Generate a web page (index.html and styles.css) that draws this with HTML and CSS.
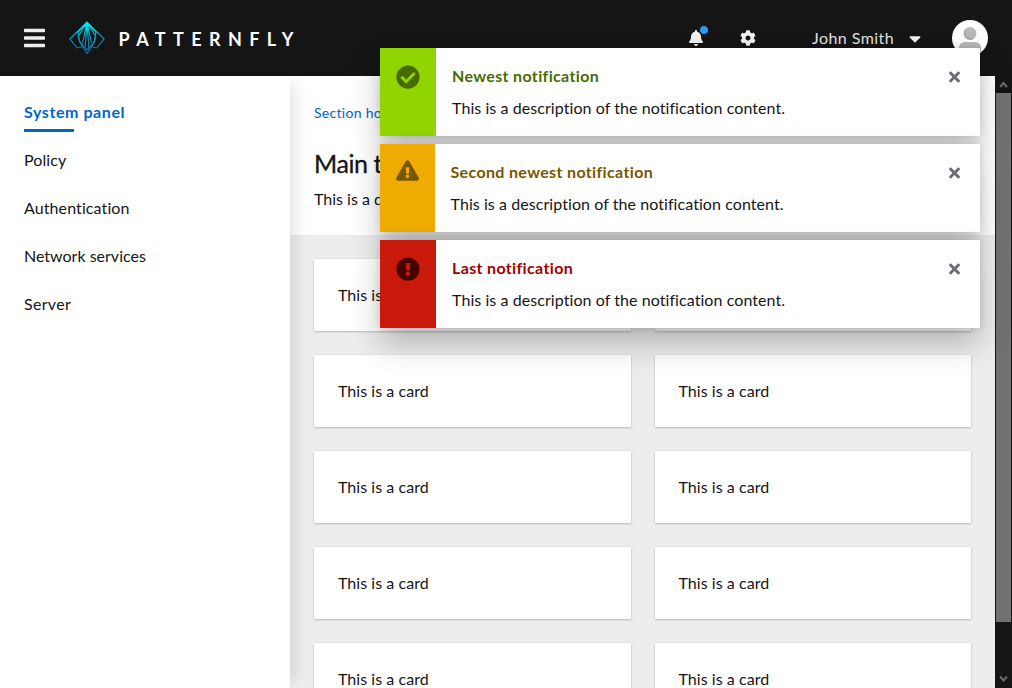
FILE: index.html
```
<!DOCTYPE html>
<html lang="en">
<head>
<meta charset="utf-8">
<title>PatternFly</title>
<link rel="stylesheet" href="styles.css">
</head>
<body>
<div class="page">
  <header class="masthead">
    <button class="icon-button menu" aria-label="Menu">
      <svg width="21" height="24" viewBox="0 0 448 512" fill="currentColor"><path d="M16 132h416c8.837 0 16-7.163 16-16V76c0-8.837-7.163-16-16-16H16C7.163 60 0 67.163 0 76v40c0 8.837 7.163 16 16 16zm0 160h416c8.837 0 16-7.163 16-16v-40c0-8.837-7.163-16-16-16H16c-8.837 0-16 7.163-16 16v40c0 8.837 7.163 16 16 16zm0 160h416c8.837 0 16-7.163 16-16v-40c0-8.837-7.163-16-16-16H16c-8.837 0-16 7.163-16 16v40c0 8.837 7.163 16 16 16z"/></svg>
    </button>
    <div class="brand">
      <svg class="brand-mark" width="36" height="34" viewBox="0 0 36 34" fill="none" stroke="url(#wing)" stroke-width="1.1">
        <defs><linearGradient id="wing" gradientUnits="userSpaceOnUse" x1="0" y1="0" x2="0" y2="33"><stop offset="0" stop-color="#00eeff"/><stop offset=".25" stop-color="#00d2ea"/><stop offset=".55" stop-color="#0799c4"/><stop offset="1" stop-color="#0a6fb5"/></linearGradient></defs>
        <path d="M18 1.500.9 17.800 8.200 27l5.300-1.200L18 32.500l4.500-6.700 5.300 1.200 7.300-9.200Z"/>
        <path d="M18 1.500 9.200 15.500 11 21.500 18 29l7-7.500 1.800-6Z"/>
        <path d="M18 1.500 9 11.500 10.500 20l3 5.800M18 1.500l9 10L25.500 20l-3 5.800M18 1.500 13.500 22M18 1.500 22.500 22M18 1.500l-1.800 25M18 1.500l1.800 25"/>
        <path d="M18 .5 13 5.500h10Z" fill="#00e6f8" stroke="none"/>
      </svg>
      <span class="brand-name">PATTERNFLY</span>
    </div>
    <div class="tools">
      <button class="icon-button bell" aria-label="Notifications">
        <svg width="14" height="16" viewBox="0 0 448 512" fill="currentColor"><path d="M224 512c35.32 0 63.97-28.65 63.97-64H160.03c0 35.35 28.65 64 63.97 64zm215.39-149.71c-19.32-20.76-55.47-51.99-55.47-154.29 0-77.7-54.48-139.9-127.94-155.16V32c0-17.67-14.32-32-31.98-32s-31.98 14.33-31.98 32v20.84C118.56 68.1 64.08 130.3 64.08 208c0 102.3-36.15 133.53-55.47 154.29-6 6.45-8.66 14.16-8.61 21.71.11 16.4 12.98 32 32.1 32h383.8c19.12 0 32-15.6 32.1-32 .05-7.55-2.61-15.27-8.61-21.71z"/></svg>
        <span class="unread"></span>
      </button>
      <button class="icon-button cog" aria-label="Settings">
        <svg width="16" height="16" viewBox="0 0 512 512" fill="currentColor"><path d="M487.4 315.7l-42.6-24.6c4.3-23.2 4.3-47 0-70.2l42.6-24.6c4.9-2.8 7.1-8.6 5.5-14-11.1-35.6-30-67.8-54.7-94.6-3.8-4.1-10-5.1-14.8-2.3L380.8 110c-17.9-15.4-38.5-27.3-60.8-35.1V25.8c0-5.6-3.9-10.5-9.4-11.7-36.7-8.2-74.3-7.8-109.2 0-5.500 1.200-9.400 6.100-9.400 11.700V75c-22.200 7.900-42.800 19.800-60.800 35.100L88.700 85.500c-4.900-2.800-11-1.900-14.800 2.300-24.700 26.700-43.600 58.900-54.700 94.600-1.700 5.400.6 11.200 5.500 14L67.300 221c-4.300 23.200-4.300 47 0 70.200l-42.600 24.600c-4.900 2.800-7.100 8.600-5.500 14 11.100 35.600 30 67.800 54.700 94.600 3.800 4.100 10 5.100 14.800 2.300l42.600-24.600c17.900 15.400 38.500 27.300 60.800 35.100v49.200c0 5.600 3.900 10.500 9.400 11.700 36.700 8.200 74.300 7.800 109.200 0 5.500-1.200 9.400-6.100 9.400-11.700v-49.200c22.200-7.900 42.800-19.800 60.800-35.100l42.600 24.600c4.900 2.800 11 1.900 14.800-2.300 24.700-26.700 43.600-58.900 54.700-94.600 1.500-5.500-.7-11.300-5.600-14.100zM256 336c-44.100 0-80-35.900-80-80s35.900-80 80-80 80 35.900 80 80-35.900 80-80 80z"/></svg>
      </button>
      <button class="user"><span class="user-name">John Smith</span>
        <svg width="12" height="19" viewBox="0 0 320 512" fill="currentColor"><path d="M31.3 192h257.3c17.800 0 26.700 21.500 14.100 34.100L174.100 354.800c-7.800 7.800-20.500 7.800-28.300 0L17.200 226.100C4.600 213.500 13.500 192 31.300 192z"/></svg>
      </button>
      <svg class="avatar" width="36" height="36" viewBox="0 0 36 36"><defs><clipPath id="round"><circle cx="18" cy="18" r="18"/></clipPath></defs><g clip-path="url(#round)"><path fill="#fff" d="M0 0h36v36H0z"/><path fill="#b8b8b8" d="M7 36v-8c0-4 3-6 7-6h8c4 0 7 2 7 6v8z"/><circle cx="18" cy="13.500" r="6.500" fill="#b8b8b8"/><path fill="#a6a6a6" d="M13.500 9a6.500 6.500 0 0 0 8.700 9.500C15 19 12.500 14 13.500 9z"/></g></svg>
    </div>
  </header>
  <div class="body">
    <nav class="sidebar">
      <a class="nav-link current">System panel</a>
      <a class="nav-link">Policy</a>
      <a class="nav-link">Authentication</a>
      <a class="nav-link">Network services</a>
      <a class="nav-link">Server</a>
    </nav>
    <main class="main">
      <section class="intro">
        <div class="breadcrumb">Section home</div>
        <h1 class="title">Main title</h1>
        <p class="lead">This is a demo</p>
      </section>
      <section class="cards">
        <article class="card">This is</article><article class="card"></article>
        <article class="card">This is a card</article><article class="card">This is a card</article>
        <article class="card">This is a card</article><article class="card">This is a card</article>
        <article class="card">This is a card</article><article class="card">This is a card</article>
        <article class="card">This is a card</article><article class="card">This is a card</article>
      </section>
    </main>
    <div class="scrollbar">
      <svg class="arrow" width="9" height="17" viewBox="0 0 9 17" fill="none" stroke="#6b6b6b" stroke-width="2"><path d="M1 11l3.500-4L8 11"/></svg>
      <div class="thumb"></div>
      <svg class="arrow" width="9" height="17" viewBox="0 0 9 17" fill="none" stroke="#6b6b6b" stroke-width="2"><path d="M1 5.500l3.500 4L8 5.500"/></svg>
    </div>
  </div>
</div>
<div class="toasts">
  <div class="toast success">
    <div class="strip"><svg width="24" height="24" viewBox="0 0 512 512" fill="currentColor"><path d="M504 256c0 136.967-111.033 248-248 248S8 392.967 8 256 119.033 8 256 8s248 111.033 248 248zM227.314 387.314l184-184c6.248-6.248 6.248-16.379 0-22.627l-22.627-22.627c-6.248-6.249-16.379-6.249-22.628 0L216 308.118l-70.059-70.059c-6.248-6.248-16.379-6.248-22.628 0l-22.627 22.627c-6.248 6.248-6.248 16.379 0 22.627l104 104c6.249 6.249 16.379 6.249 22.628.001z"/></svg></div>
    <div class="message"><h2 class="heading">Newest notification</h2><p class="detail">This is a description of the notification content.</p></div>
    <button class="close" aria-label="Close"><svg width="11" height="16" viewBox="0 0 352 512" fill="currentColor"><path d="M242.720 256l100.070-100.070c12.280-12.280 12.280-32.190 0-44.480l-22.240-22.240c-12.280-12.280-32.190-12.280-44.480 0L176 189.280 75.930 89.210c-12.280-12.280-32.190-12.280-44.480 0L9.210 111.450c-12.280 12.280-12.280 32.190 0 44.480L109.280 256 9.210 356.070c-12.280 12.280-12.280 32.190 0 44.480l22.240 22.240c12.280 12.280 32.200 12.280 44.480 0L176 322.720l100.070 100.070c12.280 12.280 32.200 12.280 44.480 0l22.240-22.240c12.280-12.280 12.280-32.190 0-44.480z"/></svg></button>
  </div>
  <div class="toast warning">
    <div class="strip"><svg width="23" height="21" viewBox="0 0 576 512" fill="currentColor"><path d="M569.517 440.013C587.975 472.007 564.806 512 527.940 512H48.054c-36.937 0-59.999-40.055-41.577-71.987L246.423 23.985c18.467-32.009 64.720-31.951 83.154 0l239.940 416.028zM288 354c-25.405 0-46 20.595-46 46s20.595 46 46 46 46-20.595 46-46-20.595-46-46-46zm-43.673-165.346l7.418 136c.347 6.364 5.609 11.346 11.982 11.346h48.546c6.373 0 11.635-4.982 11.982-11.346l7.418-136c.375-6.874-5.098-12.654-11.982-12.654h-63.383c-6.884 0-12.356 5.780-11.981 12.654z"/></svg></div>
    <div class="message"><h2 class="heading">Second newest notification</h2><p class="detail">This is a description of the notification content.</p></div>
    <button class="close" aria-label="Close"><svg width="11" height="16" viewBox="0 0 352 512" fill="currentColor"><path d="M242.720 256l100.070-100.070c12.280-12.280 12.280-32.190 0-44.480l-22.240-22.240c-12.280-12.280-32.190-12.280-44.480 0L176 189.280 75.930 89.210c-12.280-12.280-32.190-12.280-44.480 0L9.210 111.450c-12.280 12.280-12.280 32.190 0 44.480L109.280 256 9.210 356.070c-12.280 12.280-12.280 32.190 0 44.480l22.240 22.240c12.280 12.280 32.200 12.280 44.480 0L176 322.720l100.070 100.070c12.280 12.280 32.200 12.280 44.480 0l22.240-22.240c12.280-12.280 12.280-32.190 0-44.480z"/></svg></button>
  </div>
  <div class="toast danger">
    <div class="strip"><svg width="24" height="24" viewBox="0 0 512 512" fill="currentColor"><path d="M504 256c0 136.997-111.043 248-248 248S8 392.997 8 256C8 119.083 119.043 8 256 8s248 111.083 248 248zm-248 50c-25.405 0-46 20.595-46 46s20.595 46 46 46 46-20.595 46-46-20.595-46-46-46zm-43.673-165.346l7.418 136c.347 6.364 5.609 11.346 11.982 11.346h48.546c6.373 0 11.635-4.982 11.982-11.346l7.418-136c.375-6.874-5.098-12.654-11.982-12.654h-63.383c-6.884 0-12.356 5.780-11.981 12.654z"/></svg></div>
    <div class="message"><h2 class="heading">Last notification</h2><p class="detail">This is a description of the notification content.</p></div>
    <button class="close" aria-label="Close"><svg width="11" height="16" viewBox="0 0 352 512" fill="currentColor"><path d="M242.720 256l100.070-100.070c12.280-12.280 12.280-32.190 0-44.480l-22.240-22.240c-12.280-12.280-32.190-12.280-44.480 0L176 189.280 75.930 89.210c-12.280-12.280-32.190-12.280-44.480 0L9.210 111.450c-12.280 12.280-12.280 32.190 0 44.480L109.280 256 9.210 356.070c-12.280 12.280-12.280 32.190 0 44.480l22.240 22.240c12.280 12.280 32.200 12.280 44.480 0L176 322.720l100.070 100.070c12.280 12.280 32.200 12.280 44.480 0l22.240-22.240c12.280-12.280 12.280-32.190 0-44.480z"/></svg></button>
  </div>
</div>
</body>
</html>
```
FILE: styles.css
```
* { box-sizing: border-box; }
body {
  margin: 0;
  overflow: hidden;
  font: 400 16px/24px Lato, sans-serif;
  color: #151515;
  background: #151515;
}
h1, h2, p { margin: 0; }
svg { display: block; flex: none; }
button { font: inherit; color: inherit; background: none; border: 0; padding: 0; }

.page { display: flex; flex-direction: column; height: 688px; overflow: hidden; }

.masthead {
  flex: none;
  display: flex;
  align-items: center;
  height: 76px;
  padding: 0 24px;
  background: #151515;
  color: #fff;
}
.menu { color: #ededed; }
.brand { display: flex; align-items: center; margin-left: 23.5px; }
.brand-name { margin: 2px 0 0 14px; font-size: 18px; font-weight: 700; letter-spacing: 7.4px; }
.tools { display: flex; align-items: center; margin-left: auto; color: #f0f0f0; }
.icon-button { position: relative; }
.unread {
  position: absolute;
  top: -5px;
  right: -6px;
  width: 10px;
  height: 10px;
  border: 1px solid #151515;
  border-radius: 50%;
  background: #2b9af3;
}
.cog { margin-left: 37px; }
.user { display: flex; align-items: center; margin: 0 31px 0 56px; }
.user-name { width: 97px; text-align: left; color: #e0e0e0; letter-spacing: .45px; }

.body { flex: 1; display: flex; min-height: 0; }
.sidebar {
  position: relative;
  z-index: 1;
  flex: none;
  width: 290px;
  padding: 16px 24px;
  background: #fff;
  box-shadow: 12px 0 16px -8px rgba(3, 3, 3, .12);
}
.nav-link { display: block; height: 48px; padding: 8px 0; letter-spacing: .1px; }
.nav-link:nth-child(4) { letter-spacing: 0; }
.nav-link:nth-child(5) { letter-spacing: .3px; }
.current { color: #06c; font-weight: 700; letter-spacing: .58px; }
.current::after { content: ""; display: block; width: 50px; height: 3px; margin-top: 5px; background: #06c; }

.main { flex: 1; min-width: 0; overflow: hidden; background: #ededed; }
.intro { height: 159px; padding: 26px 24px 0; background: #fff; }
.breadcrumb { font-size: 14px; line-height: 21px; color: #06c; letter-spacing: .3px; }
.title { margin-top: 22px; font-size: 25px; line-height: 36px; font-weight: 400; letter-spacing: -.4px; -webkit-text-stroke: .3px #151515; }
.lead { margin-top: 6px; }
.cards {
  display: grid;
  grid-template-columns: 1fr 1fr;
  grid-auto-rows: 72px;
  gap: 24px;
  padding: 24px;
}
.card {
  padding: 24px;
  letter-spacing: .05px;
  background: #fff;
  box-shadow: 0 1px 2px rgba(3, 3, 3, .2), 0 0 2px rgba(3, 3, 3, .08);
}

.scrollbar {
  flex: none;
  display: flex;
  flex-direction: column;
  align-items: center;
  width: 17px;
  background: #151515;
}
.thumb { width: 15px; height: 529px; margin-bottom: 49px; background: #717171; }

.toasts {
  position: absolute;
  top: 48px;
  left: 380px;
  z-index: 2;
  display: grid;
  gap: 8px;
  width: 600px;
}
.toast {
  display: flex;
  height: 88px;
  background: #fff;
  box-shadow: 0 16px 32px rgba(3, 3, 3, .24), 0 0 8px rgba(3, 3, 3, .13);
}
.strip { flex: none; width: 56px; padding: 17px 16px; }
.message { flex: 1; padding: 16px; }
.heading { font-size: 16px; line-height: 24px; font-weight: 700; letter-spacing: .35px; }
.detail { margin-top: 8px; letter-spacing: .07px; }
.close { align-self: flex-start; margin: 21px 20px 0 0; color: #6a6e73; }
.success .strip { background: #92d400; color: #486b00; }
.success .heading { color: #486b00; }
.warning .strip { width: 55px; padding-top: 16px; background: #f0ab00; color: #795600; }
.warning .heading { color: #795600; }
.warning .message { padding-left: 15.5px; }
.danger .strip { background: #c9190b; color: #470000; }
.danger .heading { color: #a30000; }
```
